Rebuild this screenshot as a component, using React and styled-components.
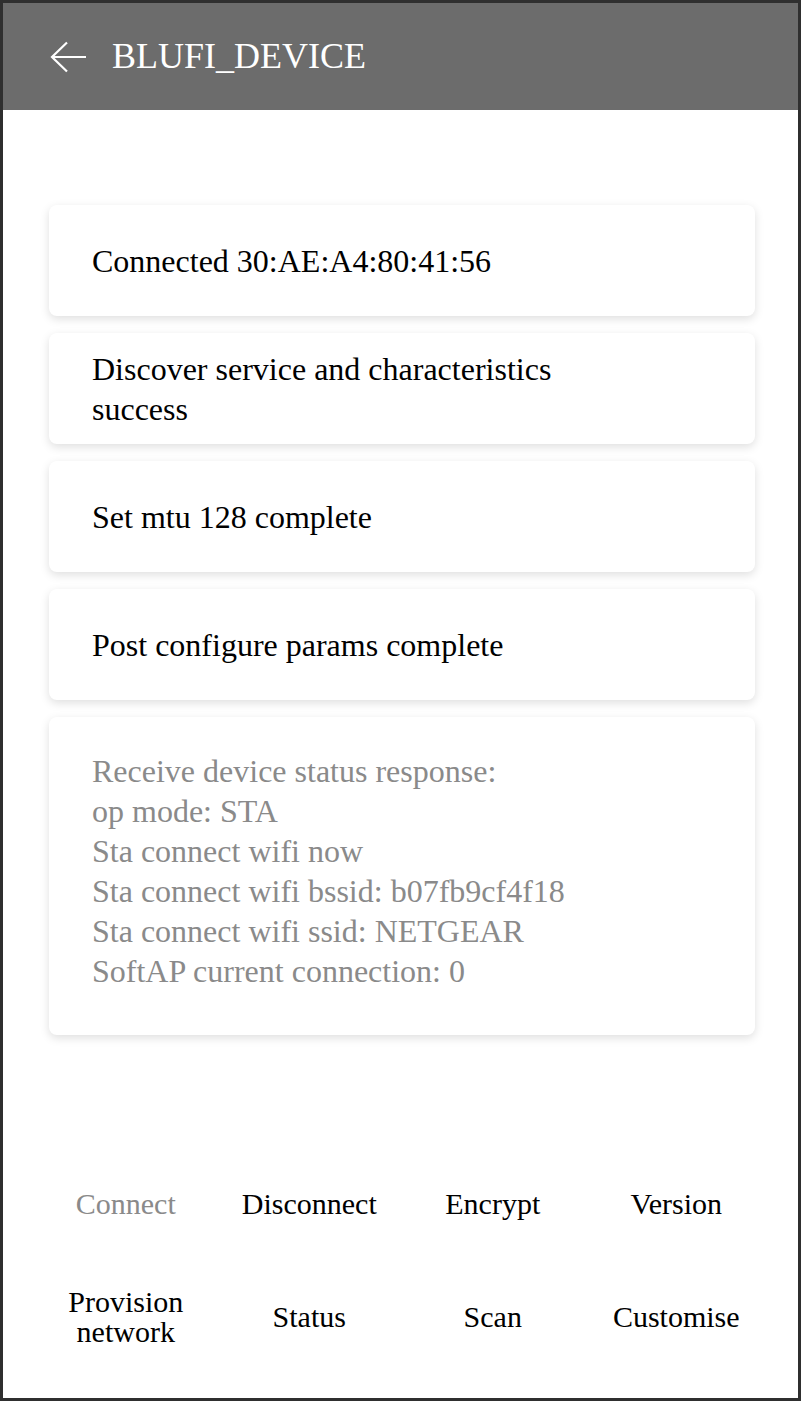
import styled, { createGlobalStyle } from 'styled-components';

const GlobalStyle = createGlobalStyle`
    *{
        box-sizing:border-box;
    }
    body{
        margin:0;
        background:#fff;
        font-family:"Liberation Serif","Times New Roman",serif;
    }
`

const Frame = styled.div`
    width:801px;
    height:1401px;
    border:3px solid #2f2f2f;
    background:#fff;
    display:flex;
    flex-direction:column;
`

const Header = styled.header`
    height:107px;
    flex-shrink:0;
    background:#6c6c6c;
    display:flex;
    align-items:center;
    padding-left:47px;
    gap:26px;
    color:#fff;
    & h1{
        margin:0 0 2px;
        font-weight:normal;
        font-size:36px;
        line-height:1;
    }
`

const BackButton = styled.button`
    border:0;
    background:none;
    padding:0;
    width:36px;
    height:32px;
    display:flex;
    cursor:pointer;
`

const Log = styled.div`
    display:flex;
    flex-direction:column;
    gap:17px;
    margin-top:95px;
    padding-left:46px;
`

const Card = styled.div`
    width:706px;
    min-height:111px;
    background:#fff;
    border-radius:8px;
    box-shadow:0 3px 10px rgba(0,0,0,0.13);
    display:flex;
    align-items:center;
    padding:${p => p.$tall ? '34px 43px 44px' : '0 43px'};
    & p{
        margin:0;
        max-width:510px;
        font-size:32px;
        line-height:40px;
        color:${p => p.$muted ? '#8a8a8a' : '#000'};
    }
`

const Actions = styled.div`
    margin-top:auto;
    margin-bottom:25px;
    padding:0 30px 0 31px;
    display:grid;
    grid-template-columns:repeat(4,1fr);
    grid-auto-rows:113px;
`

const Action = styled.button`
    border:0;
    background:none;
    padding:0;
    font-family:inherit;
    font-size:30px;
    line-height:30px;
    color:${p => p.disabled ? '#8a8a8a' : '#000'};
    cursor:${p => p.disabled ? 'default' : 'pointer'};
`

const BackArrow = () => (
    <svg width="36" height="32" viewBox="0 0 36 32" fill="none" stroke="#fff" strokeWidth="2.2">
        <line x1="2" y1="16" x2="36" y2="16" />
        <polyline points="17,1.5 2,16 17,30.5" />
    </svg>
)

const messages = [
    'Connected 30:AE:A4:80:41:56',
    'Discover service and characteristics success',
    'Set mtu 128 complete',
    'Post configure params complete',
]

const status = [
    'Receive device status response:',
    'op mode: STA',
    'Sta connect wifi now',
    'Sta connect wifi bssid: b07fb9cf4f18',
    'Sta connect wifi ssid: NETGEAR',
    'SoftAP current connection: 0',
]

const actions = [
    ['Connect', true],
    ['Disconnect'],
    ['Encrypt'],
    ['Version'],
    ['Provision network'],
    ['Status'],
    ['Scan'],
    ['Customise'],
]

const App = () => {
    return (
        <>
            <GlobalStyle />
            <Frame>
                <Header>
                    <BackButton aria-label="Back"><BackArrow /></BackButton>
                    <h1>BLUFI_DEVICE</h1>
                </Header>
                <Log>
                    {messages.map(m => (
                        <Card key={m}><p>{m}</p></Card>
                    ))}
                    <Card $tall $muted>
                        <p>{status.map(s => <span key={s}>{s}<br /></span>)}</p>
                    </Card>
                </Log>
                <Actions>
                    {actions.map(([label, disabled]) => (
                        <Action key={label} disabled={disabled}>
                            {label === 'Provision network' ? <>Provision<br />network</> : label}
                        </Action>
                    ))}
                </Actions>
            </Frame>
        </>
    )
}

export default App
